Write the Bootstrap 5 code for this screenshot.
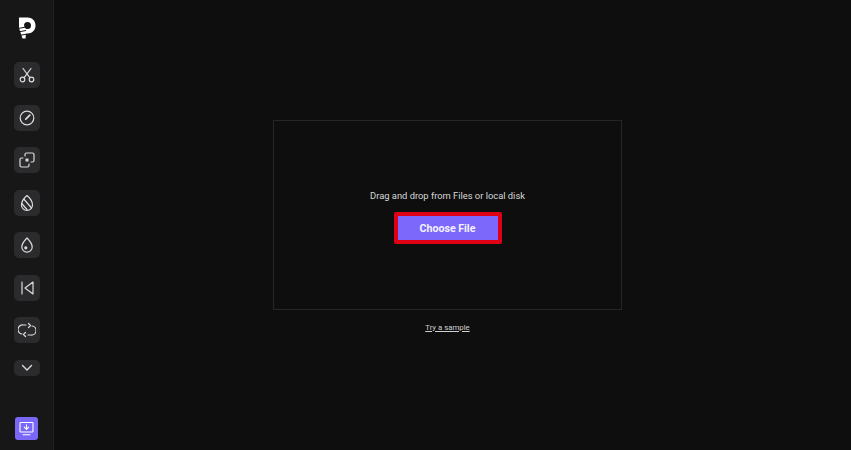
<!DOCTYPE html>
<html lang="en">
<head>
<meta charset="utf-8">
<title>Choose File</title>
<link href="https://cdn.jsdelivr.net/npm/bootstrap@5.3.0/dist/css/bootstrap.min.css" rel="stylesheet">
<style>
html,body{height:450px;overflow:hidden}
body{background:#0e0e0f;font-family:Roboto,"Noto Sans",sans-serif;color:#d6d6d6}
.side-rail{width:54px;height:450px;background:#171718;border-right:1px solid #1f1f20;padding-top:15px;padding-left:1px}
.logo-box{height:22px;width:18px;margin-bottom:25px}
.tool-stack{gap:16.5px}
.tool-btn{width:26px;height:26px;background:#2b2b2d;border:0;border-radius:5px;padding:0;color:#dcdcdc}
.tool-btn svg{width:18px;height:18px;fill:none;stroke:currentColor;stroke-width:1.2;stroke-linecap:round;stroke-linejoin:round}
.more-btn{height:16px}
.more-btn svg{width:12px;height:12px;stroke-width:1.4}
.export-btn{width:23px;height:23px;background:#7a66f7;border:0;border-radius:3px;padding:0;color:#fff;margin-top:auto;margin-bottom:10px;margin-right:1px}
.export-btn svg{width:17px;height:17px;fill:none;stroke:currentColor;stroke-width:1.1;stroke-linecap:round;stroke-linejoin:round}
.work-area{padding:120px 10px 0 0}
.drop-zone{width:349px;height:190px;border:1px solid #262627;padding-top:68px}
.drop-text{font-size:9.35px;line-height:14px;color:#d8d8d8;margin-bottom:9px}
.choose-btn{width:108px;height:32px;background:#7c69fb;border:4px solid #e00015;border-radius:2px;color:#f4f2ff;font-weight:700;font-size:10.6px;line-height:1;padding:2px 0 0}
.sample-link{font-size:7.8px;line-height:12px;color:#d0d0d0;margin-top:12px}
</style>
</head>
<body>
<div class="d-flex">
  <aside class="side-rail d-flex flex-column align-items-center flex-shrink-0">
    <div class="logo-box">
      <svg viewBox="0 0 18 22" width="18" height="22"><path d="M1 .5h8.500c4.500 0 8 3.200 8 8s-3.500 8-8 8H8l-.5 5H4.500L1 11z" fill="#fff"/><path d="M6 8.500a3.500 3.500 0 1 1 3.500 3.500c-1.500 0-2-.5-2.500-1z" fill="#171718"/><path d="M0 11.500l8-1.500M0 15l8-1.500M1 18.500l7-1.200" stroke="#171718" stroke-width="1"/></svg>
    </div>
    <div class="tool-stack d-flex flex-column align-items-center">
      <button class="tool-btn d-flex align-items-center justify-content-center" aria-label="Cut"><svg viewBox="0 0 18 18"><circle cx="4.500" cy="13.500" r="2.300"/><circle cx="13.500" cy="13.500" r="2.300"/><path d="M6 11.800 13 2.500M12 11.800 5 2.500"/></svg></button>
      <button class="tool-btn d-flex align-items-center justify-content-center" aria-label="Speed"><svg viewBox="0 0 18 18"><circle cx="9" cy="9" r="6.800"/><path d="M7.800 10.200 11.800 6.200" stroke-width="1.700"/></svg></button>
      <button class="tool-btn d-flex align-items-center justify-content-center" aria-label="Crop"><svg viewBox="0 0 18 18"><path d="M7 5V3.500A1.500 1.500 0 0 1 8.500 2h6A1.500 1.500 0 0 1 16 3.500v6a1.500 1.500 0 0 1-1.500 1.500H13"/><path d="M5 7H3.500A1.500 1.500 0 0 0 2 8.500v6A1.500 1.500 0 0 0 3.500 16h6a1.500 1.500 0 0 0 1.500-1.500V13"/><rect x="7.500" y="7.500" width="3" height="3" fill="currentColor" stroke="none"/></svg></button>
      <button class="tool-btn d-flex align-items-center justify-content-center" aria-label="Rotate"><svg viewBox="0 0 18 18"><path d="M9 1.500C6 4 3.500 8 3.500 11a5.500 5.500 0 0 0 11 0C14.500 8 12 4 9 1.500z"/><path d="M5.800 5 13.500 14M3.800 9.500 9 15.500"/></svg></button>
      <button class="tool-btn d-flex align-items-center justify-content-center" aria-label="Opacity"><svg viewBox="0 0 18 18"><path d="M9 2C6.500 4.500 3.800 7.500 3.800 11a5.200 5.200 0 0 0 10.400 0C14.200 7.500 11.500 4.500 9 2z"/><circle cx="7.800" cy="11.800" r="1" fill="currentColor"/></svg></button>
      <button class="tool-btn d-flex align-items-center justify-content-center" aria-label="Reverse"><svg viewBox="0 0 18 18"><path d="M4 3v12M15 3v12L7 9z"/></svg></button>
      <button class="tool-btn d-flex align-items-center justify-content-center" aria-label="Loop"><svg viewBox="0 0 18 18"><path d="M8 4H5a4.500 4.500 0 0 0-1 9"/><path d="M10 14h3a4.500 4.500 0 0 0 1-9"/><path d="M10.500 2.500 12.500 4.500 10.500 6.500M7.500 11.500l-2 2 2 2"/></svg></button>
      <button class="tool-btn more-btn d-flex align-items-center justify-content-center" aria-label="More"><svg viewBox="0 0 12 12"><path d="M1.500 3.500 6 8l4.500-4.500"/></svg></button>
    </div>
    <button class="export-btn d-flex align-items-center justify-content-center" aria-label="Export"><svg viewBox="0 0 17 17"><rect x="2" y="2.500" width="13" height="9.500" rx=".8"/><path d="M8.500 4.800v4.400M6.300 7.200l2.200 2.200 2.200-2.200M5 14.800h7"/></svg></button>
  </aside>
  <main class="work-area flex-grow-1 d-flex flex-column align-items-center">
    <div class="drop-zone d-flex flex-column align-items-center">
      <p class="drop-text">Drag and drop from Files or local disk</p>
      <button class="choose-btn">Choose File</button>
    </div>
    <a href="#" class="sample-link">Try a sample</a>
  </main>
</div>
</body>
</html>
